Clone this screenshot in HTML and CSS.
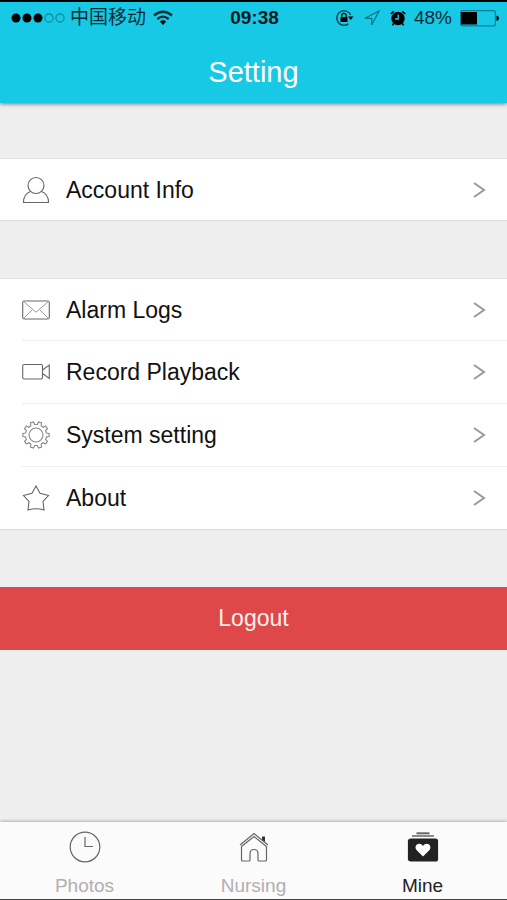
FILE: index.html
```html
<!DOCTYPE html>
<html lang="en">
<head>
<meta charset="utf-8">
<meta name="viewport" content="width=device-width, initial-scale=1">
<title>Setting</title>
<link rel="stylesheet" href="styles.css">
</head>
<body>
<header class="header">
  <div class="status">
    <div class="status-left">
      <svg width="54" height="12" viewBox="0 0 54 12" aria-hidden="true">
        <circle cx="5" cy="6" r="4.5"/><circle cx="16" cy="6" r="4.5"/><circle cx="27" cy="6" r="4.5"/>
        <g fill="none" stroke="#0a8496" stroke-width="1.1"><circle cx="38" cy="6" r="4.1"/><circle cx="49" cy="6" r="4.1"/></g>
      </svg>
      <span class="carrier">中国移动</span>
      <svg class="wifi" width="20" height="16" viewBox="0 0 20 16" aria-hidden="true">
        <g fill="none" stroke="#052c33" stroke-width="2.3"><path d="M1 5.500Q10-2 19 5.500"/><path d="M4.300 9Q10 4.200 15.700 9"/></g>
        <path d="M6.800 11.500Q10 9 13.200 11.500L10 15Z"/>
      </svg>
    </div>
    <time class="time">09:38</time>
    <div class="status-right">
      <svg width="19" height="18" viewBox="0 0 19 18" aria-hidden="true">
        <path d="M15.700 6A7.300 7.300 0 1 0 13.500 14.800" fill="none" stroke="#064a56" stroke-width="1.500"/>
        <path d="M13 7.500h5.500l-2.700 3.500z"/><rect x="5.500" y="8" width="7" height="5" rx=".5"/>
        <path d="M6.800 8.500V6.500a2.200 2.200 0 0 1 4.400 0V8.500" fill="none" stroke="#000" stroke-width="1.300"/>
      </svg>
      <svg class="location" width="16" height="16" viewBox="0 0 16 16" aria-hidden="true"><path d="M15 1L1 8.300H7.700V15Z" fill="none" stroke="#087285" stroke-width="1.200"/></svg>
      <svg width="16" height="16" viewBox="0 0 16 16" aria-hidden="true">
        <circle cx="8" cy="8.500" r="6.700"/><path d="M.8 4L3.700 1.300M15.200 4L12.300 1.300M3.500 13.500L2.500 15.300M12.500 13.500L13.500 15.300" stroke="#000" stroke-width="1.700"/>
        <path d="M8.200 4.500V9H5" fill="none" stroke="#18c9e6" stroke-width="1.400"/>
      </svg>
      <span class="percent">48%</span>
      <svg class="battery" width="39" height="17" viewBox="0 0 39 17" aria-hidden="true">
        <rect x=".6" y=".6" width="34.800" height="15.300" rx="2" fill="none" stroke="#078196" stroke-width="1.200"/>
        <rect x="1" y="2" width="16" height="12.500"/><path d="M36.500 5.500Q39 6 39 8.200T36.500 11Z"/>
      </svg>
    </div>
  </div>
  <h1 class="title">Setting</h1>
</header>
<main class="content">
  <nav class="group" aria-label="Account">
    <a class="row" href="#account">
      <svg class="icon" viewBox="0 0 28 28"><circle cx="14" cy="9.500" r="8"/><path d="M8.500 15.500C4.500 17 1.500 20.500 1.500 26.500H26.500C26.500 20.500 23.500 17 19.500 15.500"/></svg>
      <span class="label">Account Info</span>
      <svg class="chevron" viewBox="0 0 14 18"><path d="M2 2L12 9L2 16"/></svg>
    </a>
  </nav>
  <nav class="group" aria-label="Settings">
    <a class="row" href="#alarms">
      <svg class="icon" viewBox="0 0 28 28"><rect x=".7" y="5" width="26.600" height="18" rx="1.500"/><path class="faint" d="M1.500 5.500L11.500 14Q14 18 16.500 14L26.500 5.500M1.500 22.500L10.500 13.500M26.500 22.500L17.500 13.500"/></svg>
      <span class="label">Alarm Logs</span>
      <svg class="chevron" viewBox="0 0 14 18"><path d="M2 2L12 9L2 16"/></svg>
    </a>
    <a class="row" href="#playback">
      <svg class="icon" viewBox="0 0 28 28"><rect x=".7" y="6.500" width="19.800" height="14.500" rx="1.500"/><path d="M20.500 12L27.300 7V20.500L20.500 15.500"/></svg>
      <span class="label">Record Playback</span>
      <svg class="chevron" viewBox="0 0 14 18"><path d="M2 2L12 9L2 16"/></svg>
    </a>
    <a class="row" href="#system">
      <svg class="icon gear" viewBox="0 0 28 28"><circle cx="14" cy="14" r="7"/><path d="M15.300 3.500L16.500 1L19.600 2L19.100 4.700L21.200 6.300L23.600 5L25.500 7.600L23.600 9.500L24.400 12L27.100 12.400V15.600L24.400 16L23.600 18.500L25.500 20.400L23.600 23L21.200 21.700L19.100 23.300L19.600 26L16.500 27L15.300 24.500H12.700L11.500 27L8.400 26L8.900 23.300L6.800 21.700L4.400 23L2.500 20.400L4.400 18.500L3.600 16L.9 15.600V12.400L3.600 12L4.400 9.500L2.500 7.600L4.400 5L6.800 6.300L8.900 4.700L8.400 2L11.500 1L12.700 3.500Z"/></svg>
      <span class="label">System setting</span>
      <svg class="chevron" viewBox="0 0 14 18"><path d="M2 2L12 9L2 16"/></svg>
    </a>
    <a class="row" href="#about">
      <svg class="icon" viewBox="0 0 28 28"><path d="M14 2L18 9.300L26.500 11.500L21 17.500L22 26Q14 23.500 6 26L7 17.500L1.500 11.500L10 9.300Z"/></svg>
      <span class="label">About</span>
      <svg class="chevron" viewBox="0 0 14 18"><path d="M2 2L12 9L2 16"/></svg>
    </a>
  </nav>
  <button class="logout" type="button">Logout</button>
</main>
<nav class="tabs" aria-label="Main">
  <a class="tab" href="#photos">
    <svg class="tab-icon" viewBox="0 0 32 32"><circle cx="16" cy="16" r="14.800"/><path d="M16 6V15.500H24"/></svg>
    <span>Photos</span>
  </a>
  <a class="tab" href="#nursing">
    <svg class="tab-icon" viewBox="0 0 32 32"><path d="M2 14L16 2.500L30 14"/><path d="M3.500 15.500L16 5.500L28.500 15.500V29Q28.500 30 27.500 30H21Q20 30 20 29V22.500Q20 18.500 16 18.500T12 22.500V29Q12 30 11 30H4.500Q3.500 30 3.500 29Z"/><path class="chimney" d="M24 5.500H27V11L24 8.500Z"/></svg>
    <span>Nursing</span>
  </a>
  <a class="tab tab-active" href="#mine" aria-current="page">
    <svg class="tab-icon" viewBox="0 0 32 32"><rect class="album" x="1.500" y="8" width="29" height="22" rx="2"/><path d="M5 5H27" stroke-width="1.500"/><path d="M9.500 2.300H22.500" stroke-width="2"/><path class="heart" d="M16 25.500L9.500 19C6 14 13 10 16 15C19 10 26 14 22.500 19Z"/></svg>
    <span>Mine</span>
  </a>
</nav>
</body>
</html>
```
FILE: styles.css
```css
* { box-sizing: border-box; }
body {
  margin: 0;
  min-height: 100vh;
  display: flex;
  flex-direction: column;
  background: #eee;
  color: #111;
  font-family: "Liberation Sans", "Noto Sans CJK SC", sans-serif;
}
a { color: inherit; text-decoration: none; }
svg { display: block; flex: none; }
.header {
  border-top: 2px solid #000;
  padding-bottom: 6px;
  background: #18c9e6;
  box-shadow: 0 1px 4px rgba(0, 0, 0, .5);
}
.status {
  display: grid;
  grid-template-columns: 1fr auto 1fr;
  align-items: center;
  height: 32px;
  padding: 0 9px 0 11px;
  color: #052c33;
  font-size: 19px;
}
.status-left, .status-right { display: flex; align-items: center; }
.status-left { gap: 5px; }
.status-right { justify-content: flex-end; gap: 8px; }
.carrier { line-height: 24px; }
.wifi { margin-left: 2px; }
.location { margin: 0 2px; }
.battery { margin-right: -1px; }
.time { font-weight: bold; color: #031c20; }
.title {
  margin: 0;
  padding-top: 14px;
  color: #fff;
  font-size: 29px;
  line-height: 49px;
  font-weight: normal;
  text-align: center;
}
.content { flex: 1; padding-top: 55px; }
.group {
  margin-bottom: 57px;
  padding-left: 22px;
  border-top: 1px solid #e4e4e4;
  border-bottom: 1px solid #dcdcdc;
  background: #fff;
}
.row {
  display: flex;
  align-items: center;
  height: 61px;
  padding-right: 21px;
}
.row + .row { height: 63px; border-top: 1px solid #eee; }
.label { flex: 1; margin-left: 16px; font-size: 23px; line-height: 28px; }
.icon { width: 28px; height: 28px; fill: none; stroke: #666; stroke-width: 1.1; }
.icon .faint { stroke: #999; stroke-width: 1; }
.gear { stroke: #888; }
.chevron { width: 14px; height: 18px; fill: none; stroke: #999; stroke-width: 2; }
.logout {
  display: block;
  width: 100%;
  height: 63px;
  padding: 0;
  border: 0;
  background: #df4848;
  color: #fff0ee;
  font: 23px "Liberation Sans", sans-serif;
}
.tabs {
  display: grid;
  grid-template-columns: repeat(3, 1fr);
  height: 78px;
  padding-top: 9px;
  border-bottom: 1px solid #444;
  background: #fbfbfb;
  box-shadow: 0 -1px 3px rgba(0, 0, 0, .25);
}
.tab {
  display: flex;
  flex-direction: column;
  align-items: center;
  gap: 11px;
  color: #b0b0b0;
  font-size: 19px;
  line-height: 24px;
}
.tab-active { color: #222; }
.tab-icon { width: 32px; height: 32px; fill: none; stroke: #666; stroke-width: 1.2; }
.tab-icon .album { fill: #222; stroke: #222; }
.tab-icon .chimney { fill: #333; stroke: none; }
.tab-icon .heart { fill: #fff; stroke: none; }
```
